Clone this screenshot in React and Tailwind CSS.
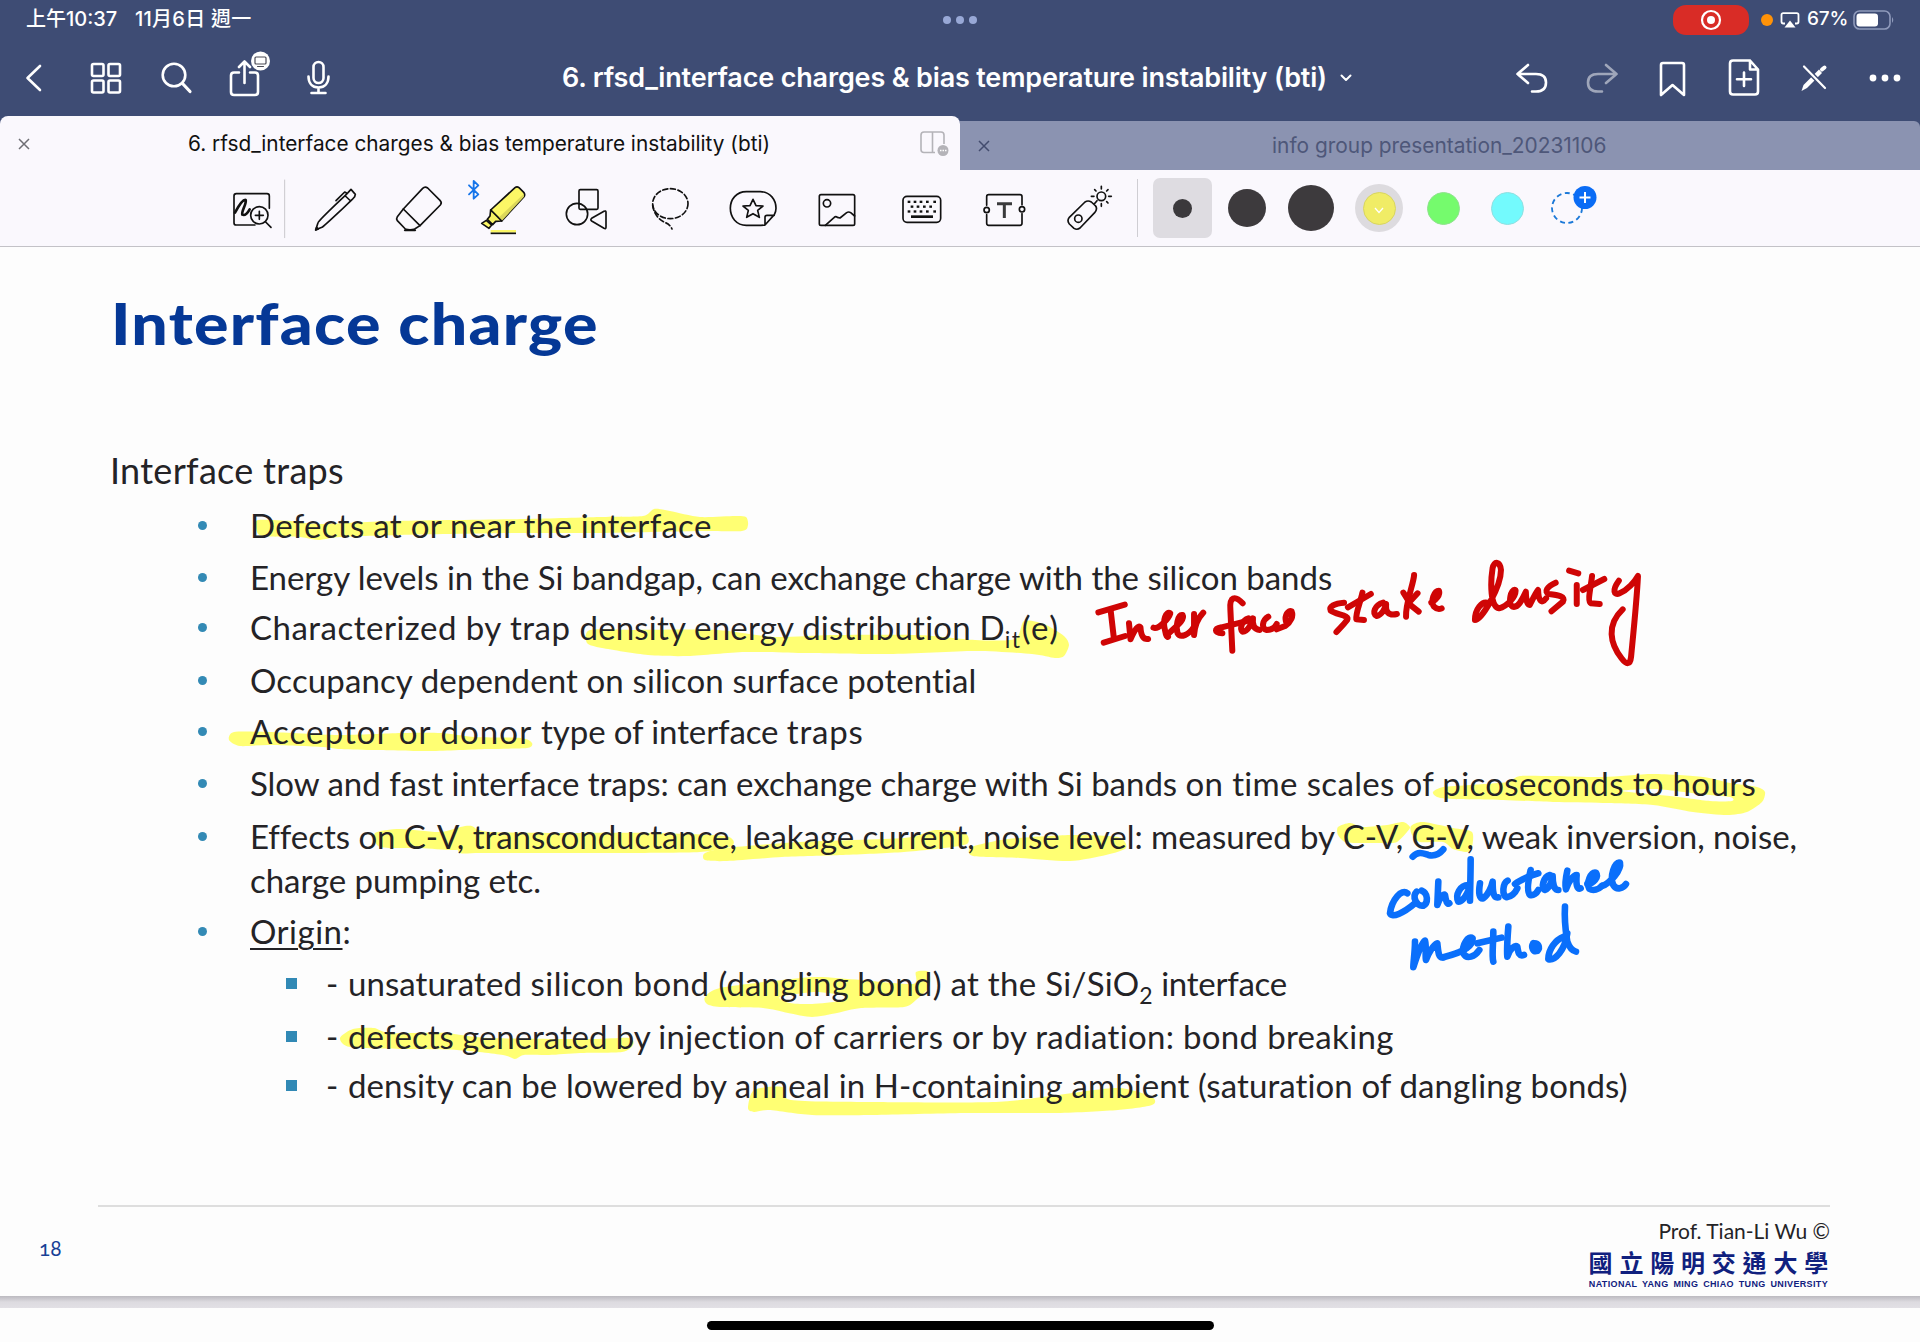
const LATO = "font-['Lato','Noto_Sans_CJK_TC',sans-serif]";
const INTER = "font-['Inter','Noto_Sans_CJK_TC',sans-serif]";

/* Closed, softly rounded outline through a list of points. */
function blob(pts) {
  const n = pts.length;
  let d = `M${pts[0][0]},${pts[0][1]}`;
  for (let i = 0; i < n; i++) {
    const p0 = pts[(i - 1 + n) % n];
    const p1 = pts[i];
    const p2 = pts[(i + 1) % n];
    const p3 = pts[(i + 2) % n];
    d += `C${p1[0] + (p2[0] - p0[0]) / 8},${p1[1] + (p2[1] - p0[1]) / 8} ${p2[0] - (p3[0] - p1[0]) / 8},${p2[1] - (p3[1] - p1[1]) / 8} ${p2[0]},${p2[1]}`;
  }
  return d + "Z";
}

const MARKS = [
  [[[258, 520], [290, 521], [320, 524], [393, 521], [524, 519], [600, 517], [643, 516], [654, 509], [670, 511], [700, 517], [735, 516], [746, 517], [748, 525], [742, 531], [700, 531], [600, 533], [520, 533], [400, 535], [340, 537], [318, 540], [300, 537], [262, 536], [256, 528]]],
  [[[590, 630], [636, 630], [717, 630], [774, 637], [831, 635], [918, 635], [975, 640], [1015, 639], [1024, 621], [1044, 624], [1064, 636], [1069, 645], [1064, 656], [1055, 658], [1032, 654], [975, 651], [889, 654], [803, 653], [745, 652], [688, 656], [648, 655], [602, 648], [587, 643]]],
  [[[229, 740], [234, 732], [269, 732], [338, 735], [401, 733], [441, 733], [475, 737], [521, 738], [532, 743], [527, 748], [487, 749], [430, 751], [372, 750], [338, 749], [323, 747], [269, 745], [240, 746]]],
  [
    [[1433, 792], [1443, 787], [1470, 785], [1507, 782], [1520, 776], [1553, 776], [1603, 777], [1653, 774], [1703, 777], [1730, 783], [1757, 787], [1765, 792], [1762, 802], [1747, 812], [1727, 815], [1693, 812], [1653, 805], [1603, 803], [1553, 802], [1503, 800], [1453, 799], [1437, 797]],
    [[1622, 791], [1655, 789], [1700, 794], [1730, 797], [1732, 801], [1710, 801], [1670, 796]],
  ],
  [[[375, 833], [400, 829], [440, 832], [465, 826], [475, 828], [480, 846], [455, 850], [420, 848], [380, 847]]],
  [[[457, 830], [470, 827], [490, 832], [560, 833], [650, 833], [725, 836], [732, 846], [700, 852], [620, 853], [540, 853], [480, 853], [460, 853], [456, 842]]],
  [[[705, 853], [727, 848], [800, 842], [904, 838], [935, 830], [965, 833], [968, 843], [953, 847], [904, 852], [843, 855], [782, 857], [727, 861], [705, 860]]],
  [[[972, 847], [1008, 839], [1070, 835], [1118, 837], [1126, 848], [1106, 855], [1070, 861], [1020, 858], [973, 856]]],
  [[[1338, 827], [1350, 823], [1363, 827], [1387, 825], [1403, 822], [1410, 827], [1407, 832], [1397, 842], [1387, 843], [1360, 843], [1345, 842], [1338, 835]]],
  [[[1411, 826], [1423, 822], [1453, 828], [1472, 832], [1472, 847], [1467, 852], [1453, 849], [1443, 842], [1420, 842], [1412, 835]]],
  [
    [[705, 997], [720, 988], [782, 980], [818, 977], [861, 980], [913, 984], [916, 972], [929, 972], [929, 987], [916, 1000], [904, 1007], [861, 1008], [837, 1013], [812, 1017], [788, 1013], [763, 1008], [720, 1007], [707, 1004]],
    [[780, 997], [815, 992], [845, 996], [840, 1001], [812, 1004], [790, 1003]],
  ],
  [[[340, 1038], [353, 1029], [374, 1028], [390, 1033], [445, 1033], [488, 1038], [592, 1039], [629, 1038], [633, 1045], [622, 1052], [580, 1053], [549, 1055], [524, 1055], [515, 1059], [503, 1055], [457, 1050], [402, 1049], [350, 1047]]],
  [[[748, 1108], [754, 1090], [782, 1087], [791, 1100], [873, 1102], [996, 1102], [1057, 1095], [1118, 1088], [1152, 1097], [1152, 1105], [1118, 1110], [1057, 1113], [965, 1113], [873, 1115], [812, 1115], [769, 1110], [754, 1112]]],
];

const RED_INK = [
  "M48,217L117,194", "M80,210L88,290", "M62,308L118,288",
  "M128,250L132,298Q150,250 158,262Q160,300 178,297",
  "M192,263C205,270 232,235 236,220C225,212 215,240 222,270C225,290 228,292 230,290",
  "M232,280C250,260 275,240 268,225C255,222 250,260 255,280C262,295 285,285 297,262",
  "M298,222L298,285C300,250 312,230 322,218",
  "M372,280C350,278 350,266 370,262L440,242",
  "M425,190C405,165 390,170 393,210L398,332",
  "M440,235C425,240 415,265 425,275C440,275 450,245 452,235C450,255 455,268 470,270",
  "M492,230C477,240 472,266 488,270C500,270 510,262 514,252",
  "M514,268L536,258C552,245 558,228 553,214C544,208 534,228 538,244",
  "M690,188C665,190 650,200 655,212C670,225 705,225 698,240C685,260 675,268 670,276",
  "M738,158C732,190 720,220 722,238L742,240", "M700,202L760,162",
  "M792,188C770,195 762,222 775,228C790,225 798,200 800,192C798,215 805,228 828,222",
  "M873,105C872,130 850,190 852,230", "M845,158L858,182", "M882,160L858,190L885,215",
  "M918,188C930,180 942,165 938,152C925,152 915,185 925,200C932,208 940,208 945,205",
  "M1068,190C1050,180 1032,210 1032,240C1050,240 1100,140 1100,90C1098,65 1082,60 1078,85C1072,130 1072,200 1095,205C1115,200 1140,170 1138,150C1125,145 1118,190 1130,200C1145,205 1155,180 1165,155C1165,175 1168,195 1175,195C1182,180 1190,160 1197,150C1198,180 1205,195 1218,175",
  "M1243,128C1220,140 1212,155 1225,162C1250,165 1270,170 1262,185L1232,214",
  "M1298,135L1298,192", "M1278,92L1302,100",
  "M1338,108C1335,140 1325,185 1335,190L1358,192", "M1314,150L1370,117",
  "M1408,122C1390,150 1395,168 1410,160C1430,150 1450,125 1458,108C1455,180 1445,290 1440,350C1438,375 1428,375 1415,355C1385,310 1375,255 1418,208",
];

const BLUE_INK = [
  "M278,290C295,272 310,280 325,285C345,290 360,280 370,268",
  "M262,400C245,385 215,420 210,460C215,475 250,460 285,430",
  "M290,395C275,410 290,440 310,437C325,430 325,400 305,392",
  "M355,365L352,435C358,415 370,400 375,405C378,425 382,435 388,430",
  "M452,298C452,340 450,400 450,422", "M445,375C420,375 405,405 415,425C430,425 442,400 448,385",
  "M480,370C475,400 478,418 490,415C505,405 515,380 518,365C518,395 520,415 535,412",
  "M563,362C548,370 545,405 560,412C572,410 585,400 592,385",
  "M632,330C625,360 620,395 630,405C640,408 650,400 655,390", "M585,372C600,360 635,345 655,340",
  "M690,345C670,350 662,385 675,390C690,385 698,355 698,348C698,370 702,390 715,390",
  "M742,332C738,350 735,375 738,388C745,365 760,345 770,345C768,370 770,390 782,385",
  "M802,372C820,370 838,352 828,338C812,335 798,370 808,386C820,394 836,388 846,378",
  "M846,378C870,370 905,330 900,308C885,302 868,350 880,375C890,392 910,385 918,372",
  "M285,545C285,575 280,605 280,622C290,590 305,550 315,542C320,560 315,590 318,600C325,580 340,555 352,550C355,575 355,595 370,592",
  "M370,592C420,580 460,560 458,535C445,525 425,555 430,580C440,600 465,590 478,570",
  "M520,515C520,550 515,590 520,605", "M472,550L545,533",
  "M565,500C562,540 560,570 562,590C570,565 585,555 592,560C595,580 598,590 612,585",
  "M640,550C632,562 640,577 652,573C662,562 655,548 640,550",
  "M735,440C732,490 740,530 742,545C748,562 755,572 768,575",
  "M732,530C705,540 685,570 685,598C705,603 735,570 742,520",
];

function Ink({ paths, transform, color, width }) {
  return (
    <g transform={transform} stroke={color} strokeWidth={width} fill="none" strokeLinecap="round" strokeLinejoin="round">
      {paths.map((d) => (
        <path key={d} d={d} vectorEffect="non-scaling-stroke" />
      ))}
    </g>
  );
}

function NavIcon({ box, children, dim }) {
  return (
    <svg viewBox={box} className={dim ? "h-[60px] w-[60px] opacity-50" : "h-[60px] w-[60px]"} fill="none" stroke="#fff" strokeWidth="2.6" strokeLinecap="round" strokeLinejoin="round">
      {children}
    </svg>
  );
}

function StatusBar() {
  return (
    <div className="flex h-[39px] items-center text-white">
      <div className={`flex w-[940px] pl-[26px] text-[20px] font-medium leading-[39px] ${INTER}`}>
        <span className="w-[92px] whitespace-nowrap">上午10:37</span>
        <span className="ml-[17px] whitespace-nowrap tracking-[0.25px]">11月6日 週一</span>
      </div>
      <div className="flex w-[40px] items-center justify-center gap-[5px]">
        <i className="h-2 w-2 rounded-full bg-[#98a8d6]" />
        <i className="h-2 w-2 rounded-full bg-[#98a8d6]" />
        <i className="h-2 w-2 rounded-full bg-[#98a8d6]" />
      </div>
      <div className="ml-[693px] flex h-[30px] w-[76px] items-center justify-center rounded-[13px] bg-[#d92c26]">
        <svg viewBox="0 0 22 22" className="h-[22px] w-[22px]" fill="none" stroke="#fff" strokeWidth="2.2">
          <circle cx="11" cy="11" r="9" />
          <circle cx="11" cy="11" r="4" fill="#fff" stroke="none" />
        </svg>
      </div>
      <i className="ml-[12px] h-3 w-3 rounded-full bg-[#ff9208]" />
      <svg viewBox="0 0 20 16" className="ml-[7px] h-[16px] w-[20px]" fill="none" stroke="#fff" strokeWidth="1.8">
        <path d="M5 11.5H3.2Q1.5 11.5 1.5 9.8V2.8Q1.5 1.2 3.2 1.2H16.8Q18.5 1.2 18.5 2.8V9.8Q18.5 11.5 16.8 11.5H15" />
        <path d="M10 8.5L15.5 15.5H4.5Z" fill="#fff" stroke="none" />
      </svg>
      <span className={`ml-[7px] w-[46px] whitespace-nowrap text-[19px] font-medium tracking-[-0.1px] ${INTER}`}>67%</span>
      <svg viewBox="0 0 42 20" className="h-[20px] w-[42px]">
        <rect x="1" y="1" width="36" height="18" rx="5.5" fill="none" stroke="#8f9abb" strokeWidth="1.6" />
        <rect x="3.5" y="3.5" width="21.5" height="13" rx="3.2" fill="#fff" />
        <path d="M39 7Q41.5 10 39 13Z" fill="#8f9abb" />
      </svg>
    </div>
  );
}

function NavBar() {
  return (
    <div className="flex h-[77px] items-center">
      <div className="flex w-[354px] items-center gap-[11px] pl-[5px]">
        <NavIcon box="5 48 60 60"><path d="M40,66L27.5,78L40,90" /></NavIcon>
        <NavIcon box="76.5 48 60 60">
          <rect x="92.5" y="64" width="11.5" height="12" rx="1.5" />
          <rect x="109" y="64" width="11.5" height="12" rx="1.5" />
          <rect x="92.5" y="80.5" width="11.5" height="12" rx="1.5" />
          <rect x="109" y="80.5" width="11.5" height="12" rx="1.5" />
        </NavIcon>
        <NavIcon box="147 48 60 60">
          <circle cx="174" cy="75" r="11.3" />
          <path d="M182.5,83.5L190,91.5" strokeWidth="3.2" />
        </NavIcon>
        <NavIcon box="218 48 60 60">
          <path d="M239,72.5H234Q231,72.5 231,75.5V92Q231,95 234,95H255Q258,95 258,92V75.5Q258,72.5 255,72.5H250M244.5,83V61.5M239,67L244.5,61.5L250,67" />
          <circle cx="260.5" cy="61" r="9.5" fill="#fff" stroke="none" />
          <rect x="255" y="57" width="11" height="7" rx="1" stroke="#4a4a55" strokeWidth="1.2" />
          <path d="M257.5,66.5H263.5" stroke="#4a4a55" strokeWidth="1" />
        </NavIcon>
        <NavIcon box="289 48 60 60">
          <rect x="313.5" y="62" width="10" height="21" rx="5" />
          <path d="M308.5,76.5C308.5,83 312,87.5 318.5,87.5S328.5,83 328.5,76.5M318.5,87.5V93M311.5,93H325.5" />
        </NavIcon>
      </div>
      <div className="flex flex-1 items-center gap-[13px] pl-[208px]">
        <h1 className={`whitespace-nowrap text-[27px] font-semibold leading-[34px] tracking-[-0.17px] text-white ${INTER}`}>6. rfsd_interface charges &amp; bias temperature instability (bti)</h1>
        <svg viewBox="0 0 12 8" className="h-2 w-3" fill="none" stroke="#fff" strokeWidth="2" strokeLinecap="round" strokeLinejoin="round"><path d="M1.5 1.5L6 6L10.5 1.5" /></svg>
      </div>
      <div className="flex w-[420px] items-center gap-[10px] pl-[5px]">
        <NavIcon box="1505 48 60 60"><path d="M1528,65L1517.5,74L1528,83M1517.5,74H1536Q1546,74 1546,82.5Q1546,91.5 1536,91.5H1532" /></NavIcon>
        <NavIcon dim box="1575 48 60 60"><path d="M1606,65L1616.5,74L1606,83M1616.5,74H1598Q1588,74 1588,82.5Q1588,91.5 1598,91.5H1602" /></NavIcon>
        <NavIcon box="1645 48 60 60"><path d="M1661,65Q1661,63 1663,63H1682Q1684,63 1684,65V95L1672.5,85L1661,95Z" /></NavIcon>
        <NavIcon box="1715 48 60 60">
          <path d="M1750,60.5H1733Q1730,60.5 1730,63.5V91.5Q1730,94.5 1733,94.5H1755Q1758,94.5 1758,91.5V69.5ZM1750,60.5V69.5H1758M1744,72.5V86M1737,79.2H1751" />
        </NavIcon>
        <NavIcon box="1785.5 48 60 60">
          <path d="M1802,91L1804,85L1819.5,69.5L1822.5,73L1807.5,88Z" fill="#fff" stroke="none" />
          <path d="M1822.5,69.5L1825,67.5" strokeWidth="4" />
          <path d="M1805,67L1825.5,88" stroke="#3e4c74" strokeWidth="5" />
          <path d="M1804.5,66.5L1825.5,88" strokeWidth="2.2" />
        </NavIcon>
        <NavIcon box="1855 48 60 60">
          <g fill="#fff" stroke="none"><circle cx="1873" cy="78" r="3.4" /><circle cx="1885" cy="78" r="3.4" /><circle cx="1897" cy="78" r="3.4" /></g>
        </NavIcon>
      </div>
    </div>
  );
}

function Cross({ color }) {
  return (
    <svg viewBox="0 0 12 12" className="h-3 w-3" stroke={color} strokeWidth="1.5"><path d="M1 1L11 11M11 1L1 11" /></svg>
  );
}

function Tabs() {
  return (
    <div className="flex h-[54px] items-end">
      <div className="flex h-[54px] w-[960px] items-center rounded-t-[8px] bg-[#faf8fd] pl-[18px] pt-px">
        <Cross color="#6e6e74" />
        <span className={`ml-[158px] w-[732px] whitespace-nowrap text-[20.8px] leading-[53px] text-[#111] ${INTER}`}>6. rfsd_interface charges &amp; bias temperature instability (bti)</span>
        <svg viewBox="0 0 30 26" className="h-[26px] w-[30px]" fill="none" stroke="#b4b3b8" strokeWidth="1.6">
          <path d="M15 21.5H4Q1 21.5 1 18.5V4Q1 1 4 1H21Q24 1 24 4V13M12.5 1V21.5" />
          <circle cx="23" cy="19.5" r="5.5" fill="#b4b3b8" stroke="none" />
          <path d="M20 19.5H26.5" stroke="#fff" strokeWidth="1.5" strokeDasharray="1.5 1" />
        </svg>
      </div>
      <div className="flex h-[49px] flex-1 items-center rounded-tr-[6px] bg-[#8b93b1] pl-[18px]">
        <Cross color="#434c6e" />
        <span className={`ml-[282px] whitespace-nowrap text-[20.9px] leading-[49px] text-[#4e5779] ${INTER}`}>info group presentation_20231106</span>
      </div>
    </div>
  );
}

function Tool({ box, children }) {
  return (
    <svg viewBox={box} className="h-[64px] w-[64px] justify-self-center overflow-visible" fill="none" stroke="#111" strokeWidth="5" strokeLinecap="round" strokeLinejoin="round">
      {children}
    </svg>
  );
}

const KEY_ROWS = [
  [802, 820, 838, 857, 879],
  [811, 829, 848, 867],
  [802, 820, 838, 857, 879],
];

function Toolbar() {
  return (
    <div className="flex h-[77px] items-center border-b border-[#c3c2c7] bg-[#faf8fd]">
      <div className="ml-[210px] grid w-[921px] grid-cols-11 items-center">
        <Tool box="-15 18 192 192">
          <path d="M90,165H34Q27,165 27,158V78Q27,71 34,71H126Q133,71 133,78V115" />
          <path d="M30,128C45,100 55,88 62,90C66,100 48,125 52,134C60,138 70,125 74,118" strokeWidth="8" />
          <circle cx="103" cy="136" r="26" fill="#faf8fd" />
          <path d="M103,124V148M91,136H115M122,156L138,172" />
          <path d="M179,30V203" stroke="#c9c8cd" strokeWidth="3" />
        </Tool>
        <Tool box="236 18 192 192">
          <path d="M271,180L278,158C280,150 365,72 368,68L377,58L390,73L388,80C380,90 300,165 290,172Q280,176 271,180ZM360,78L376,93M332,92L358,66L365,70" />
          <path d="M271,180L274,172L279,177Z" fill="#111" />
        </Tool>
        <Tool box="487 18 192 192">
          <path d="M536,117L594,55Q601,48 609,54L646,91Q653,98 647,105L586,167Z" />
          <path d="M536,117L518,140Q514,146 518,152L542,177Q556,182 570,177L586,167M540,181H572" />
        </Tool>
        <Tool box="738 18 192 192">
          <path d="M797,120L870,53Q876,48 882,53L897,68Q901,74 897,80L830,153Z" fill="#fbf766" />
          <path d="M822,142L896,72L897,80L830,153Z" fill="#dcd85a" stroke="none" />
          <path d="M797,120L795,138L787,148L803,164L812,154L830,153Z" fill="#f6f263" />
          <path d="M784,151L770,160L792,175L800,165Z" fill="#fbf766" />
          <path d="M797,184H873" stroke="#fbf766" strokeWidth="8" strokeLinecap="butt" />
          <path d="M797,190H873" strokeLinecap="butt" />
          <path d="M732,46L760,73L746,86V33L760,46L732,73" stroke="#1675ea" strokeWidth="5.5" />
        </Tool>
        <Tool box="989 18 192 192">
          <rect x="1061" y="59" width="57" height="59" rx="4" />
          <circle cx="1055" cy="132" r="32" />
          <path d="M1136,124L1099,145Q1094,149 1099,153L1136,175Q1142,178 1142,172V127Q1142,121 1136,124Z" />
        </Tool>
        <Tool box="1240 18 192 192">
          <ellipse cx="1337" cy="101" rx="53" ry="45" strokeDasharray="15 8" />
          <path d="M1284,106C1288,135 1305,150 1322,158Q1335,162 1342,177" strokeDasharray="15 8" />
        </Tool>
        <Tool box="247 18 192 192">
          <path d="M376,165C365,167 350,166 320,166C290,166 272,142 272,115S290,65 320,65H362C392,65 409,90 409,115Q409,125 404,134L376,165V142Q376,136 382,136H404" />
          <path d="M340,88L349,107L370,108L354,121L359,142L340,131L321,142L326,121L310,108L331,107Z" />
        </Tool>
        <Tool box="498 18 192 192">
          <rect x="538" y="74" width="106" height="92" rx="5" />
          <circle cx="561" cy="100" r="11" />
          <path d="M556,166L582,143Q587,138 592,142L600,144L620,128Q626,124 632,128L644,138" />
        </Tool>
        <Tool box="749 18 192 192">
          <rect x="788" y="79" width="113" height="78" rx="12" />
          {KEY_ROWS.map((row, r) => row.map((x) => (
            <rect key={`${r}-${x}`} x={x} y={92 + r * 14.5} width="8" height="7" fill="#111" stroke="none" />
          )))}
          <path d="M812,140H878" strokeWidth="8" strokeLinecap="butt" />
        </Tool>
        <Tool box="999 18 192 192">
          <path d="M1040,106V80Q1040,74 1046,74H1140Q1146,74 1146,80V104M1146,131V160Q1146,166 1140,166H1046Q1040,166 1040,160V134" />
          <circle cx="1040" cy="120" r="8" />
          <circle cx="1146" cy="118" r="8" />
          <path d="M1071,101H1116M1093,101V144" stroke="#3a3a3c" strokeWidth="9" strokeLinecap="butt" />
        </Tool>
        <Tool box="1251 18 192 192">
          <path d="M1335,96L1288,142Q1280,152 1288,162L1302,175Q1311,181 1320,174L1364,128Q1374,116 1366,107L1354,96Q1344,90 1335,96ZM1362,103L1371,92" />
          <circle cx="1315" cy="146" r="11" />
          <circle cx="1384" cy="79" r="13" />
          <path d="M1384,49V57M1384,101V109M1354,79H1362M1406,79H1414M1364,59L1368,63M1404,59L1400,63M1404,99L1400,95" />
        </Tool>
      </div>
      <i className="ml-[6px] h-[58px] w-px bg-[#cfced3]" />
      <div className="ml-[15px] flex h-[60px] w-[59px] items-center justify-center rounded-[7px] bg-[#dedce1]">
        <i className="h-[19px] w-[19px] rounded-full bg-[#3b393c]" />
      </div>
      <i className="ml-[16px] h-[38px] w-[38px] rounded-full bg-[#3d3a3d]" />
      <i className="ml-[22px] h-[46px] w-[46px] rounded-full bg-[#3d3a3d]" />
      <div className="ml-[21px] flex h-[48px] w-[48px] items-center justify-center rounded-full bg-[#dddbdf]">
        <div className="flex h-[33px] w-[33px] items-center justify-center rounded-full border border-[#d8d560] bg-[#f0ec66]">
          <svg viewBox="0 0 10 7" className="mt-1 h-[7px] w-[10px]" fill="none" stroke="#fff" strokeWidth="1.3"><path d="M1 1L5 5.5L9 1" /></svg>
        </div>
      </div>
      <i className="ml-[24px] h-[33px] w-[33px] rounded-full border border-[#8fe28d] bg-[#75fb6d]" />
      <i className="ml-[31px] h-[33px] w-[33px] rounded-full border border-[#8fdfe0] bg-[#73fafd]" />
      <svg viewBox="0 0 48 48" className="ml-[26px] h-[48px] w-[48px]" fill="none">
        <circle cx="17" cy="24" r="15" stroke="#1a78d8" strokeWidth="1.8" strokeDasharray="5 3.5" />
        <circle cx="35" cy="13.5" r="11.5" fill="#0a6cf5" />
        <path d="M35 8V19M29.5 13.5H40.5" stroke="#fff" strokeWidth="2" />
      </svg>
    </div>
  );
}

function Sub({ children }) {
  return <sub className="relative bottom-[-8px] align-baseline text-[23px] leading-none">{children}</sub>;
}

const LINES = [
  { h: "h-[52px]", t: "tracking-[0.3px]", text: "Defects at or near the interface" },
  { h: "h-[50px]", t: "tracking-[-0.02px]", text: "Energy levels in the Si bandgap, can exchange charge with the silicon bands" },
  { h: "h-[53px]", t: "tracking-[0.2px]", text: <><span className="tracking-[0.5px]">Characterized by trap </span>density energy distribution D<span className="tracking-[1.6px]"><Sub>it</Sub>(e)</span></> },
  { h: "h-[51px]", t: "tracking-[0.12px]", text: "Occupancy dependent on silicon surface potential" },
  { h: "h-[52px]", t: "tracking-[-0.1px]", text: <><span className="tracking-[1.1px]">Acceptor or donor </span>type of interface <span className="tracking-[0.8px]">traps</span></> },
  { h: "h-[53px]", t: "tracking-[-0.02px]", text: <>Slow and fast interface traps: can exchange charge with Si bands <span className="tracking-[0.35px]">on time scales of picoseconds to hours</span></> },
  { h: "h-[44px]", t: "tracking-[-0.04px]", text: "Effects on C-V, transconductance, leakage current, noise level: measured by C-V, G-V, weak inversion, noise," },
  { h: "h-[51px]", t: "tracking-[-0.06px]", plain: true, text: "charge pumping etc." },
  { h: "h-[52px]", t: "tracking-[0.5px]", text: <><span className="underline decoration-2 underline-offset-[4px]">Origin</span>:</> },
];

const SUBLINES = [
  { h: "h-[53px]", t: "tracking-[0.08px]", text: <>unsaturated <span className="tracking-[0.5px]">silicon bond </span>(dangling <span className="tracking-[0.3px]">bond) at the Si/SiO<Sub>2</Sub></span><span className="tracking-[-0.25px]"> interface</span></> },
  { h: "h-[49px]", t: "tracking-[-0.05px]", text: <>defects generated by <span className="tracking-[0.32px]">injection of carriers or by radiation: bond breaking</span></> },
  { h: "h-[49px]", t: "tracking-[0.1px]", text: "density can be lowered by anneal in H-containing ambient (saturation of dangling bonds)" },
];

function Slide() {
  return (
    <main className={`relative h-[1049px] bg-[#fdfdfd] text-[#242326] [font-variant-ligatures:none] ${LATO}`}>
      <svg viewBox="0 247 1920 1049" className="absolute inset-0 h-[1049px] w-[1920px]">
        {MARKS.map((m, i) => (
          <path key={i} d={m.map(blob).join("")} fill="#ffff73" fillRule="evenodd" />
        ))}
      </svg>
      <div className="relative">
        <h2 className="ml-[111px] h-[185px] w-fit origin-left scale-x-[1.11] whitespace-nowrap pt-[41px] text-[58px] font-black leading-[70px] tracking-[1.15px] text-[#053896]">Interface charge</h2>
        <h3 className="ml-[110px] h-[68px] w-fit whitespace-nowrap pt-[13px] text-[36px] leading-[50px] tracking-[0.3px]">Interface traps</h3>
        <ul>
          {LINES.map((l, i) => (
            <li key={i} className={`flex items-start ${l.h}`}>
              <i className={l.plain ? "ml-[198px] h-[9px] w-[9px]" : "ml-[198px] mt-[21px] h-[9px] w-[9px] rounded-full bg-[#338ab5]"} />
              <span className={`ml-[43px] whitespace-nowrap text-[33px] leading-[50px] ${l.t}`}>{l.text}</span>
            </li>
          ))}
          {SUBLINES.map((l, i) => (
            <li key={i} className={`flex items-start ${l.h}`}>
              <i className="ml-[286px] mt-[20px] h-[11px] w-[11px] bg-[#3189b5]" />
              <span className="ml-[29px] w-[22px] text-[33px] leading-[50px]">-</span>
              <span className={`whitespace-nowrap text-[33px] leading-[50px] ${l.t}`}>{l.text}</span>
            </li>
          ))}
        </ul>
      </div>
      <footer className="absolute inset-x-0 bottom-0 flex h-[91px] justify-between pl-[98px] pr-[90px]">
        <div className="flex w-full justify-end border-t-2 border-[#dedede]">
          <span className="absolute left-[39px] top-[31px] text-[21px] leading-[24px] text-[#173f96] oldstyle-nums">18</span>
          <div className="flex w-[243px] flex-col items-end pt-[10px]">
            <span className="whitespace-nowrap text-[21px] leading-[28px]">Prof. Tian-Li Wu ©</span>
            <span className="mr-[-5px] mt-[2px] whitespace-nowrap text-[24px] font-bold leading-[30px] tracking-[6.8px] text-[#10207e] font-['Noto_Sans_CJK_TC',sans-serif]">國立陽明交通大學</span>
            <span className="mr-[2px] mt-px whitespace-nowrap text-[9px] font-bold leading-[12px] tracking-[0.35px] text-[#10207e] font-['Liberation_Sans',sans-serif] [word-spacing:2px]">NATIONAL YANG MING CHIAO TUNG UNIVERSITY</span>
          </div>
        </div>
      </footer>
      <svg viewBox="0 247 1920 1049" className="absolute inset-0 h-[1049px] w-[1920px]">
        <Ink paths={RED_INK} transform="translate(1080 540) scale(.3827 .3333)" color="#cf0505" width="6" />
        <Ink paths={BLUE_INK} transform="translate(1320 760) scale(.3333)" color="#0a6ffb" width="6.6" />
      </svg>
    </main>
  );
}

export default function App() {
  return (
    <div className="flex h-[1342px] w-[1920px] flex-col overflow-hidden bg-[#fdfdfd]">
      <header className="bg-[#3e4c74]">
        <StatusBar />
        <NavBar />
        <Tabs />
      </header>
      <Toolbar />
      <Slide />
      <div className="h-[12px] bg-linear-to-b from-[#bcbac0] via-[#dddbe0] to-[#e2e0e5]" />
      <div className="flex flex-1 justify-center pt-[13px]">
        <div className="h-[9px] w-[507px] rounded-full bg-black" />
      </div>
    </div>
  );
}
